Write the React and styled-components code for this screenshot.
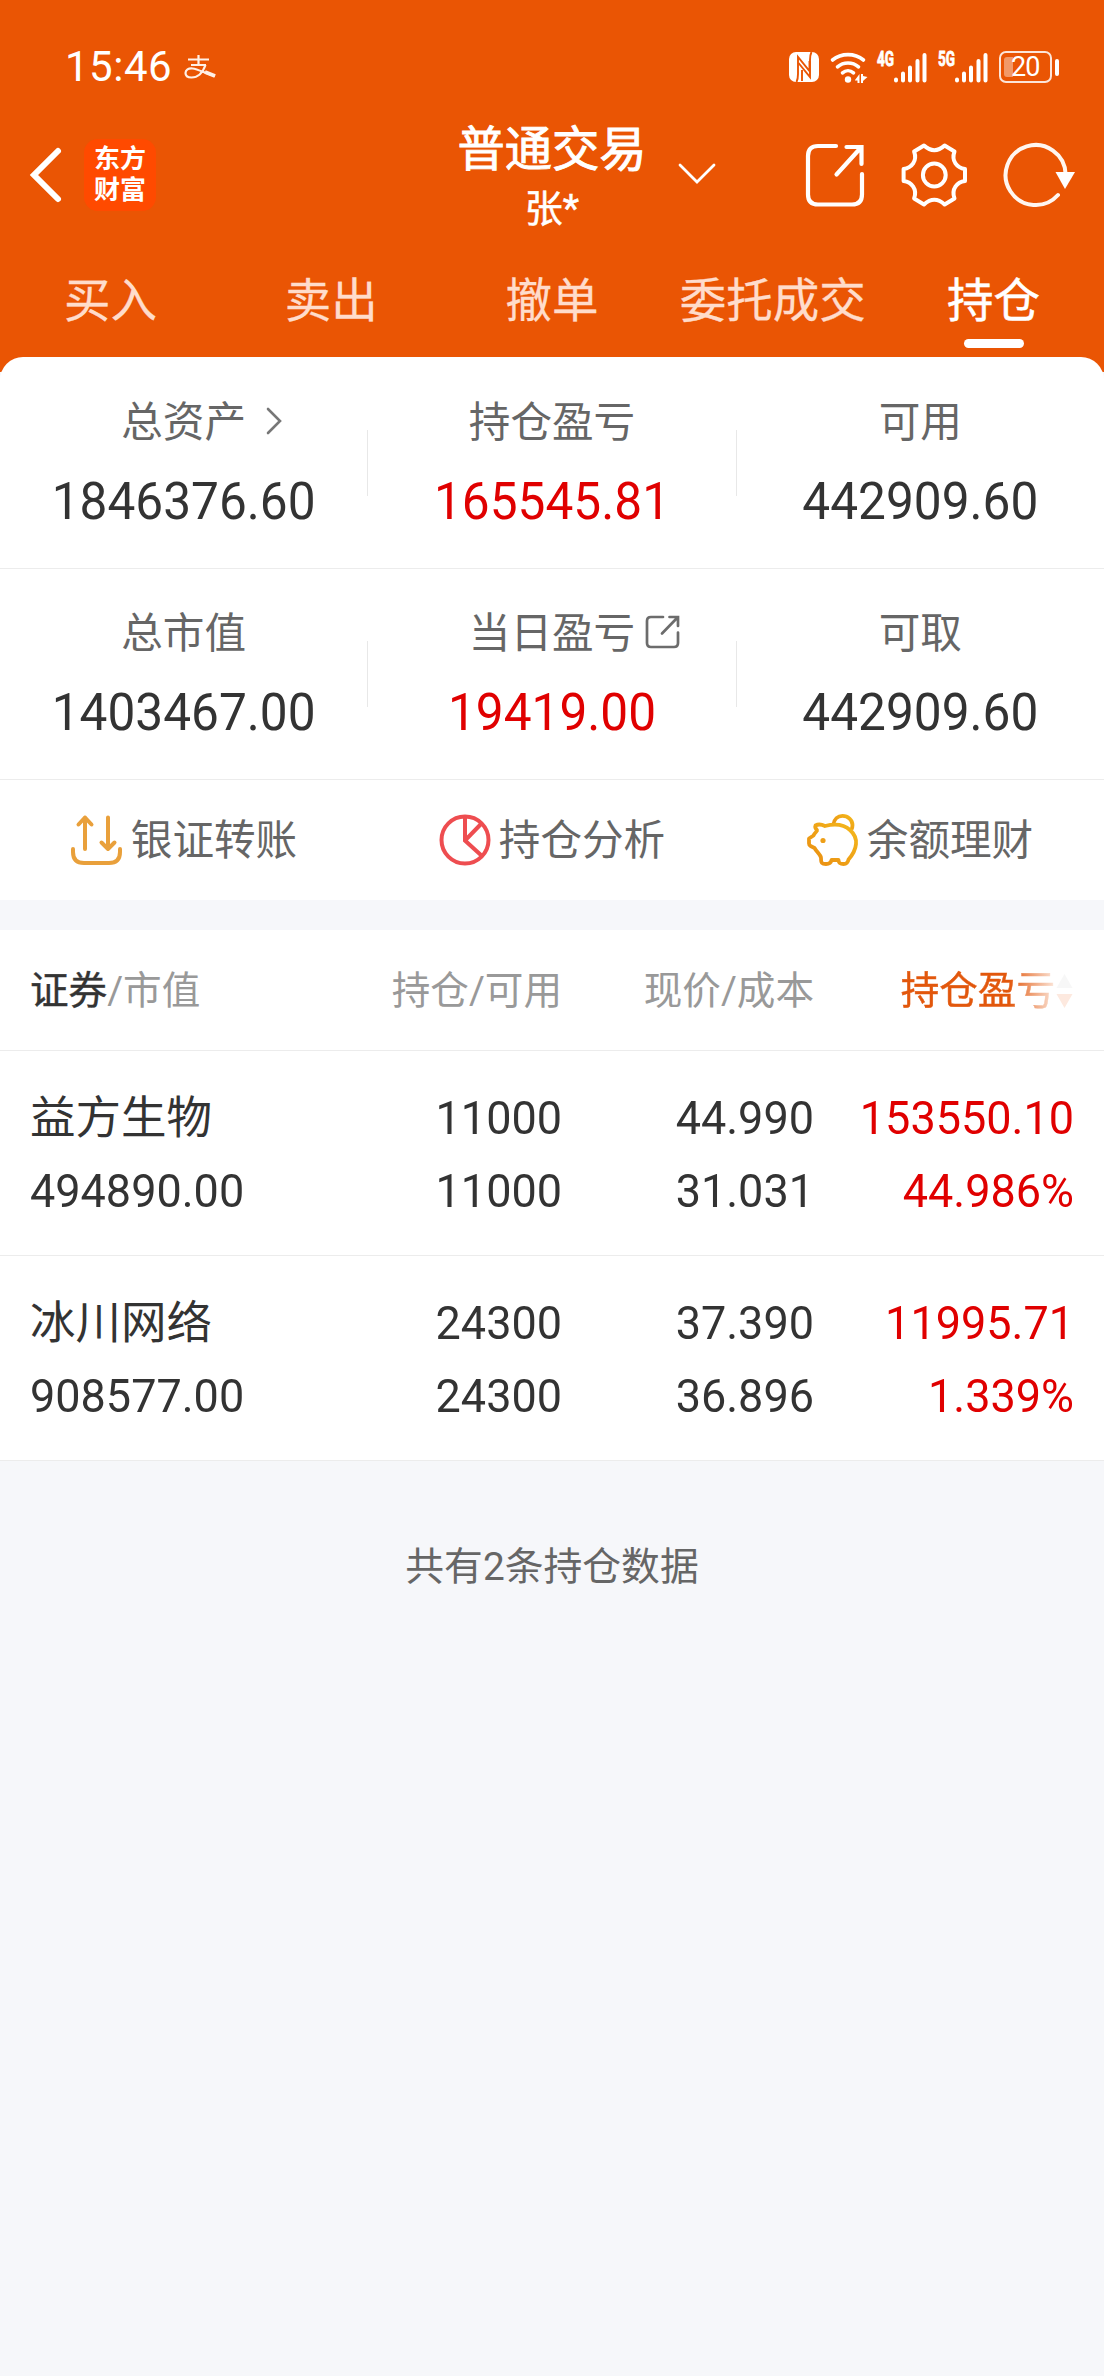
import React from 'react';
import styled, { createGlobalStyle } from 'styled-components';

const tabs = ['买入', '卖出', '撤单', '委托成交', '持仓'];

const summary = [
  [
    { label: '总资产', value: '1846376.60', icon: 'arrow' },
    { label: '持仓盈亏', value: '165545.81', red: true },
    { label: '可用', value: '442909.60' },
  ],
  [
    { label: '总市值', value: '1403467.00' },
    { label: '当日盈亏', value: '19419.00', red: true, icon: 'share' },
    { label: '可取', value: '442909.60' },
  ],
];

const holdings = [
  {
    name: '益方生物', market: '494890.00',
    amount: '11000', usable: '11000',
    price: '44.990', cost: '31.031',
    profit: '153550.10', rate: '44.986%',
  },
  {
    name: '冰川网络', market: '908577.00',
    amount: '24300', usable: '24300',
    price: '37.390', cost: '36.896',
    profit: '11995.71', rate: '1.339%',
  },
];

const App = () => {
  return (
    <Page>
      <GlobalStyle />
      <Header>
        <StatusBar>
          <Time>15:46</Time>
          <PayIcon />
          <StatusRight>
            <NfcIcon />
            <WifiIcon />
            <SignalIcon type="4G" />
            <SignalIcon type="5G" />
            <Battery>
              <BatteryBody>
                <BatteryLevel />
                <BatteryText>20</BatteryText>
              </BatteryBody>
              <BatteryCap />
            </Battery>
          </StatusRight>
        </StatusBar>

        <TitleBar>
          <TitleLeft>
            <BackIcon />
            <Logo>
              <span>东方</span>
              <span>财富</span>
            </Logo>
          </TitleLeft>
          <TitleCenter>
            <Title>普通交易</Title>
            <UserName>张*</UserName>
          </TitleCenter>
          <TitleRight>
            <DownIcon />
            <Tools>
              <ShareIcon />
              <GearIcon />
              <RefreshIcon />
            </Tools>
          </TitleRight>
        </TitleBar>

        <TabBar>
          {tabs.map((tab) => (
            <Tab key={tab} $active={tab === '持仓'}>{tab}</Tab>
          ))}
        </TabBar>
      </Header>

      <Card>
        {summary.map((row, i) => (
          <SummaryRow key={i}>
            {row.map((item, j) => (
              <React.Fragment key={item.label}>
                {j > 0 && <Divider />}
                <SummaryCell>
                  <Label>
                    {item.label}
                    {item.icon === 'arrow' && <LabelIcon $left="20px"><RightIcon /></LabelIcon>}
                    {item.icon === 'share' && <LabelIcon $left="10px"><SmallShareIcon /></LabelIcon>}
                  </Label>
                  <Value $red={item.red}>{item.value}</Value>
                </SummaryCell>
              </React.Fragment>
            ))}
          </SummaryRow>
        ))}
        <ActionRow>
          <Action><TransferIcon /><ActionText>银证转账</ActionText></Action>
          <Action><PieIcon /><ActionText>持仓分析</ActionText></Action>
          <Action><PigIcon /><ActionText>余额理财</ActionText></Action>
        </ActionRow>
      </Card>

      <Table>
        <TableHead>
          <HeadCell $left><Strong>证券</Strong>/市值</HeadCell>
          <HeadCell>持仓/可用</HeadCell>
          <HeadCell>现价/成本</HeadCell>
          <SortCell>
            <SortText>持仓盈亏</SortText>
            <SortIcon />
          </SortCell>
        </TableHead>
        {holdings.map((item) => (
          <TableRow key={item.name}>
            <Cell $left><Name>{item.name}</Name><Num>{item.market}</Num></Cell>
            <Cell><Num>{item.amount}</Num><Num>{item.usable}</Num></Cell>
            <Cell><Num>{item.price}</Num><Num>{item.cost}</Num></Cell>
            <Cell $red><Num>{item.profit}</Num><Num>{item.rate}</Num></Cell>
          </TableRow>
        ))}
      </Table>

      <Footer>共有2条持仓数据</Footer>
    </Page>
  );
};

export default App;

const GlobalStyle = createGlobalStyle`
  * {
    box-sizing: border-box;
  }
  body {
    margin: 0;
    background: #f6f7fa;
  }
  p {
    margin: 0;
  }
  svg {
    display: block;
    flex: none;
    overflow: visible;
  }
`;

const Page = styled.div`
  width: 1104px;
  min-height: 2376px;
  background: #f6f7fa;
  font-family: Roboto, "Noto Sans CJK SC", sans-serif;
  color: #333;
`;

const Header = styled.header`
  height: 372px;
  background: #ea5504;
  color: white;
`;

const StatusBar = styled.div`
  display: flex;
  align-items: center;
  height: 90px;
  padding: 44px 45px 0 65px;
`;

const Time = styled.span`
  width: 119px;
  font-size: 42px;
  line-height: 46px;
  letter-spacing: 0.5px;
  white-space: nowrap;
`;

const StatusRight = styled.div`
  display: flex;
  align-items: center;
  gap: 10.5px;
  margin-left: auto;
`;

const Battery = styled.div`
  display: flex;
  align-items: center;
  gap: 3px;
  margin-left: 1px;
`;

const BatteryBody = styled.div`
  position: relative;
  width: 53px;
  height: 32px;
  border: 2.5px solid rgba(255, 255, 255, 0.85);
  border-radius: 7px;
`;

const BatteryLevel = styled.div`
  width: 9px;
  height: 20px;
  margin: 4px 0 0 3px;
  border-radius: 3px 0 0 3px;
  background: rgba(255, 255, 255, 0.4);
`;

const BatteryText = styled.span`
  position: absolute;
  top: 0;
  left: 10px;
  font-size: 27px;
  line-height: 28px;
  letter-spacing: -0.8px;
`;

const BatteryCap = styled.div`
  width: 4px;
  height: 17px;
  border-radius: 2px;
  background: white;
`;

const TitleBar = styled.div`
  display: grid;
  grid-template-columns: 1fr auto 1fr;
  align-items: center;
  height: 170px;
`;

const TitleLeft = styled.div`
  display: flex;
  align-items: center;
  gap: 20px;
  padding-left: 28px;
`;

const Logo = styled.div`
  display: flex;
  flex-direction: column;
  align-items: center;
  justify-content: center;
  width: 72px;
  height: 72px;
  border-radius: 14px;
  background: #ff4a00;
  font-size: 26px;
  font-weight: 700;
  line-height: 31px;
`;

const TitleCenter = styled.div`
  padding-top: 8px;
  text-align: center;
  white-space: nowrap;
`;

const Title = styled.h1`
  margin: 0;
  font-size: 47.3px;
  font-weight: 400;
  line-height: 60px;
  -webkit-text-stroke: 0.9px white;
`;

const UserName = styled.p`
  font-size: 38px;
  line-height: 58px;
  -webkit-text-stroke: 0.5px white;
`;

const TitleRight = styled.div`
  display: flex;
  align-items: center;
  justify-content: space-between;
  padding: 0 27px 0 31px;
`;

const Tools = styled.div`
  display: flex;
  align-items: center;
  gap: 35px;
`;

const TabBar = styled.nav`
  display: flex;
  padding-top: 11px;
`;

const Tab = styled.div`
  display: flex;
  flex: 1;
  flex-direction: column;
  align-items: center;
  font-size: 46.5px;
  line-height: 60px;
  color: ${({ $active }) => ($active ? 'white' : '#ffdccb')};
  -webkit-text-stroke: ${({ $active }) => ($active ? '0.5px white' : '0.3px #ffdccb')};

  &::after {
    content: "";
    width: 60px;
    height: 9px;
    margin-top: 8px;
    border-radius: 5px;
    background: ${({ $active }) => ($active ? 'white' : 'transparent')};
  }
`;

const Card = styled.section`
  position: relative;
  margin-top: -15px;
  padding-top: 1px;
  border-radius: 23px 23px 0 0;
  background: white;
`;

const SummaryRow = styled.div`
  display: flex;
  height: 211px;
  border-bottom: 1px solid #ececec;
`;

const SummaryCell = styled.div`
  display: flex;
  flex: 1;
  flex-direction: column;
  align-items: center;
  padding-top: 35px;
`;

const Divider = styled.div`
  width: 1px;
  height: 66px;
  margin-top: 72px;
  background: #e8e8e8;
`;

const Label = styled.div`
  position: relative;
  font-size: 41.6px;
  line-height: 60px;
  color: #666;
`;

/* hangs off the label so that the text itself stays centred */
const LabelIcon = styled.span`
  position: absolute;
  top: -2px;
  left: 100%;
  display: flex;
  align-items: center;
  height: 60px;
  margin-left: ${({ $left }) => $left};
`;

const Value = styled.div`
  margin-top: 18px;
  font-size: 49.6px;
  line-height: 60px;
  color: ${({ $red }) => ($red ? '#e00000' : '#333')};
  transform: scaleY(1.05);
`;

const ActionRow = styled.div`
  display: flex;
  height: 120px;
`;

const Action = styled.div`
  display: flex;
  flex: 1;
  align-items: center;
  justify-content: center;
  gap: 8px;
`;

const ActionText = styled.span`
  padding-top: 2px;
  font-size: 41.6px;
  line-height: 60px;
  color: #666;
`;

const Table = styled.section`
  margin-top: 30px;
  background: white;
`;

const TableHead = styled.div`
  display: grid;
  grid-template-columns: 280px 252px 252px 260px;
  align-items: center;
  height: 121px;
  padding: 2px 30px 0;
  border-bottom: 1px solid #ececec;
  font-size: 38.6px;
  line-height: 60px;
  color: #999;
`;

const HeadCell = styled.div`
  text-align: ${({ $left }) => ($left ? 'left' : 'right')};
`;

const Strong = styled.span`
  color: #333;
  -webkit-text-stroke: 0.4px #333;
`;

const SortCell = styled.div`
  display: flex;
  align-items: center;
  justify-content: flex-end;
`;

const SortText = styled.span`
  background: linear-gradient(90deg, #e2570c 70%, #fbe6da 100%);
  background-clip: text;
  color: transparent;
  -webkit-text-stroke: 0.5px transparent;
`;

const TableRow = styled.div`
  display: grid;
  grid-template-columns: 280px 252px 252px 260px;
  height: 205px;
  padding: 30px 29px 0 30px;
  border-bottom: 1px solid #ececec;
  font-size: 45.5px;
  line-height: 73px;
`;

const Cell = styled.div`
  text-align: ${({ $left }) => ($left ? 'left' : 'right')};
  color: ${({ $red }) => ($red ? '#e00000' : '#333')};
`;

const Name = styled.p`
  height: 73px;
  padding-top: 1px;
  white-space: nowrap;
`;

const Num = styled.p`
  font-size: 45px;
  transform: scaleY(1.04);
`;

const Footer = styled.footer`
  padding-top: 76px;
  font-size: 38.8px;
  line-height: 60px;
  text-align: center;
  color: #666;
`;

const PayIcon = () => (
  <svg width="32" height="26" viewBox="0 0 32 26" fill="none" stroke="#fff0e6" strokeWidth="2.2">
    <path d="M4 5.500H25M14.500 1V11M7 11H22" />
    <path d="M21.500 11C19 18 14 23.500 7.500 23.500C3.500 23.500 1.500 21.500 1.500 19C1.500 16 4.500 14 8.500 14.500C14 15.200 22 19.500 31 22" />
    <path d="M21 18L31 22" strokeWidth="4" />
  </svg>
);

const NfcIcon = () => (
  <svg width="30" height="30" viewBox="0 0 30 30" fill="none">
    <rect width="30" height="30" rx="7" fill="white" />
    <path d="M7.500 30Q9 27 9 22V5L20.500 19V9" stroke="#ea5504" strokeWidth="1.900" />
    <path d="M22.500 0Q21 3 21 8V25L9.500 11M13 18V29" stroke="#ea5504" strokeWidth="1.900" />
  </svg>
);

const WifiIcon = () => (
  <svg width="37" height="31" viewBox="0 0 37 31" fill="none" stroke="white" strokeWidth="3.600" strokeLinecap="round">
    <path d="M2.500 8C11.500 0.800 24.500 0.800 33.500 8" />
    <path d="M7.500 14.800C13.500 9.700 22.500 9.700 28.500 14.800" />
    <path d="M12.500 20.800C15.800 18 20.200 18 23.500 20.800" />
    <circle cx="18" cy="27.500" r="3.200" fill="white" stroke="none" />
    <path d="M25 28L29.500 22V31H27.500V28.500H25ZM31 22H33V31H31ZM33 24L37.500 25L33 29Z" fill="white" stroke="none" />
  </svg>
);

const SignalIcon = ({ type }) => (
  <svg width="50" height="31" viewBox="0 0 50 31" fill="white" stroke="white" strokeWidth="4" strokeLinecap="round">
    <text x="0" y="14" fontSize="19.500" fontWeight="700" strokeWidth="0.800" textLength="17" lengthAdjust="spacingAndGlyphs">{type}</text>
    <path d="M19 27.500V28.500M26 21.500V28.500M33 15.500V28.500M40.500 9V28.500M47.500 3V28.500" />
  </svg>
);

const BackIcon = () => (
  <svg width="36" height="60" viewBox="0 0 36 60" fill="none" stroke="white" strokeWidth="6" strokeLinecap="round">
    <path d="M30 6L6 30L30 54" />
  </svg>
);

const DownIcon = () => (
  <svg width="38" height="24" viewBox="0 0 38 24" fill="none" stroke="white" strokeWidth="2.800" strokeLinecap="round">
    <path d="M2 2L19 19L36 2" />
  </svg>
);

const ShareIcon = () => (
  <svg width="60" height="66" viewBox="0 0 60 66" fill="none" stroke="white" strokeWidth="4.200" strokeLinecap="round">
    <path d="M31 4H13Q3 4 3 14V52.500Q3 62.500 13 62.500H47Q57 62.500 57 52.500V32" />
    <path d="M41.500 5H56.500V22M56 5.500L31.500 32.500" />
  </svg>
);

const GearIcon = () => (
  <svg width="68" height="66" viewBox="0 0 68 66" fill="none" stroke="white" strokeWidth="4" strokeLinejoin="round">
    <path d="M24 3.500Q34.300 13 44.600 3.500L54.500 9.500C51 19 57 26 65 27V39C57 40 51 47 54.500 56.500L44.600 62.500Q34.300 53 24 62.500L14.100 56.500C17.600 47 11.600 40 3.600 39V27C11.600 26 17.600 19 14.100 9.500Z" />
    <circle cx="34.300" cy="33" r="11.400" />
  </svg>
);

const RefreshIcon = () => (
  <svg width="74" height="66" viewBox="0 0 74 66" fill="none" stroke="#fff6f0" strokeWidth="4" strokeLinecap="round">
    <path d="M62.600 32A30 30 0 1 0 55 53" />
    <path d="M52.500 30H72L62 47Z" fill="white" stroke="none" />
  </svg>
);

const RightIcon = () => (
  <svg width="16" height="28" viewBox="0 0 16 28" fill="none" stroke="#777" strokeWidth="2.600" strokeLinecap="round">
    <path d="M2 2L14 14L2 26" />
  </svg>
);

const SmallShareIcon = () => (
  <svg width="35" height="34" viewBox="0 0 35 34" fill="none" stroke="#6c6c6c" strokeWidth="2.700" strokeLinecap="round">
    <path d="M18 2H6Q2 2 2 6V28Q2 32 6 32H29Q33 32 33 28V17.500" />
    <path d="M24.500 2H33V11M32.500 2.500L17 18.500" />
  </svg>
);

const TransferIcon = () => (
  <svg width="52" height="50" viewBox="0 0 52 50" fill="none" stroke="#e9a03b" strokeWidth="4" strokeLinecap="round" strokeLinejoin="round">
    <path d="M14 34V2.500M7.500 9.500L14 2.500L20.500 9.500" />
    <path d="M37 2.500V34M30.500 27.500L37 34L43.500 27.500" />
    <path d="M2 34V37Q2 48 13 48H38Q49 48 49 37V34" />
  </svg>
);

const PieIcon = () => (
  <svg width="52" height="52" viewBox="0 0 52 52" fill="none" stroke="#ee4d50" strokeWidth="4">
    <circle cx="26" cy="26" r="23.500" />
    <path d="M26 2.500V26.500L43 42M26 26.500L42.500 9.500" />
  </svg>
);

const PigIcon = () => (
  <svg width="52" height="52" viewBox="0 0 52 52" fill="none" strokeWidth="3.800" strokeLinejoin="round">
    <defs>
      <linearGradient id="pig" x1="0" y1="1" x2="1" y2="0">
        <stop offset="0" stopColor="#e98d12" />
        <stop offset="1" stopColor="#f4b81c" />
      </linearGradient>
    </defs>
    <g stroke="url(#pig)">
      <path d="M26.500 10.500C27 5 31 1.800 35.500 1.800C41 1.800 45.500 6 45.500 11Q45.500 13.500 44.500 15.500" />
      <path d="M8.500 11.500C12 9.500 15 10.500 18 12C28 9.500 37 10.500 43 16C48 20.500 49.500 25 49 30C48.500 36 45 41.500 41.500 45.500C41 48.500 39.500 50 36.500 50C32.500 50 31.800 49 31.500 46H24.500C24 49 22.500 50 19 50C15 50 14 49.500 14 44C14 41 10 38.500 7.500 34L3.500 32Q2 31 2 29.500V24.500L6.500 21.500C8 18 10.500 17.500 10 16Q7.500 13.500 8.500 11.500Z" />
    </g>
    <circle cx="16" cy="26.500" r="2.600" fill="#ee9f18" />
  </svg>
);

const SortIcon = () => (
  <svg width="19" height="36" viewBox="0 0 19 36">
    <path d="M1.500 15L9.500 1L17.500 15Z" fill="#f7f7f7" />
    <path d="M1.500 21L9.500 35L17.500 21Z" fill="#fde9df" />
  </svg>
);
